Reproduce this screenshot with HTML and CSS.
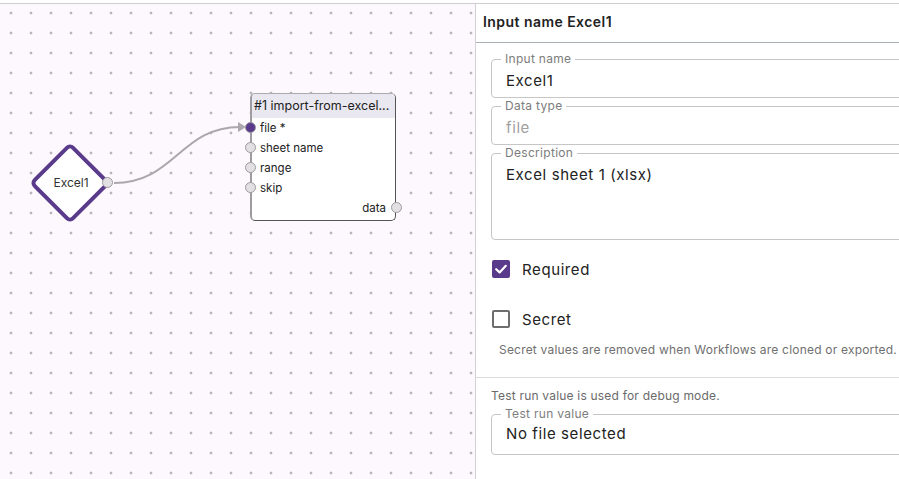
FILE: index.html
```html
<!DOCTYPE html>
<html>
<head>
<meta charset="utf-8">
<link rel="stylesheet" href="styles.css">
</head>
<body>
<div class="app">
  <div class="canvas">
    <svg class="edges" width="475" height="475" viewBox="0 0 475 475">
      <path d="M114 183 C 175 183, 180 127, 240 127" fill="none" stroke="#aaa7ad" stroke-width="2"/>
      <path d="M238 122 L246 127 L238 132 Z" fill="#aaa7ad"/>
    </svg>
    <div class="diamond"></div>
    <div class="diamond-label">Excel1</div>
    <div class="port port-out-diamond"></div>

    <div class="node">
      <div class="node-title">#1 import-from-excel...</div>
      <div class="node-body">
        <div class="row"><span class="port port-in filled"></span>file *</div>
        <div class="row"><span class="port port-in"></span>sheet name</div>
        <div class="row"><span class="port port-in"></span>range</div>
        <div class="row"><span class="port port-in"></span>skip</div>
        <div class="row out">data<span class="port port-out"></span></div>
      </div>
    </div>
  </div>

  <div class="panel">
    <div class="panel-header">Input name Excel1</div>
    <div class="panel-body">
      <fieldset class="field">
        <legend>Input name</legend>
        <div class="value">Excel1</div>
      </fieldset>
      <fieldset class="field">
        <legend>Data type</legend>
        <div class="value muted">file</div>
      </fieldset>
      <fieldset class="field">
        <legend>Description</legend>
        <div class="value area">Excel sheet 1 (xlsx)</div>
      </fieldset>

      <label class="check first">
        <span class="box checked">
          <svg width="18" height="18" viewBox="0 0 18 18"><path d="M4.2 9.2 L7.6 12.4 L13.8 5.8" fill="none" stroke="#fff" stroke-width="2.2" stroke-linecap="round" stroke-linejoin="round"/></svg>
        </span>
        Required
      </label>
      <label class="check">
        <span class="box"></span>
        Secret
      </label>
      <div class="helper">Secret values are removed when Workflows are cloned or exported.</div>
    </div>
    <div class="divider"></div>
    <div class="panel-body second">
      <div class="note">Test run value is used for debug mode.</div>
      <fieldset class="field test">
        <legend>Test run value</legend>
        <div class="value">No file selected</div>
      </fieldset>
    </div>
  </div>
</div>
</body>
</html>
```
FILE: styles.css
```css
html, body {
  margin: 0;
  padding: 0;
  background: #fff;
}
body {
  font-family: Inter, "Noto Sans", sans-serif;
  color: #222;
  width: 899px;
  height: 479px;
  overflow: hidden;
}
.app {
  margin-top: 3px;
  border-top: 1px solid #cfcfcf;
  display: flex;
  height: 475px;
}
.canvas {
  position: relative;
  width: 475px;
  flex: none;
  height: 475px;
  background-color: #fdf8fd;
  background-image: radial-gradient(circle at 10px 10px, #b8b4bc 1.2px, transparent 1.7px);
  background-size: 20px 20px;
  background-position: 1px -1px;
  border-right: 1px solid #d2d2d2;
  overflow: hidden;
}
.edges {
  position: absolute;
  left: 0;
  top: -4px;
}
.diamond {
  position: absolute;
  left: 41px;
  top: 150px;
  width: 50px;
  height: 50px;
  border: 4px solid #5a3a8b;
  border-radius: 6px;
  background: #fff;
  transform: rotate(45deg);
}
.diamond-label {
  position: absolute;
  left: 31px;
  top: 171px;
  width: 80px;
  text-align: center;
  font-size: 12px;
  line-height: 16px;
  color: #333;
}
.port {
  position: absolute;
  width: 9px;
  height: 9px;
  border-radius: 50%;
  background: #e2e0e3;
  border: 1.5px solid #9c9a9e;
}
.port-out-diamond {
  left: 102px;
  top: 173px;
}
.node {
  position: absolute;
  left: 250px;
  top: 89px;
  width: 143px;
  height: 126px;
  background: #fff;
  border: 1px solid #555;
  border-left: 2px solid #9e9ca0;
  border-top-color: #aaa;
  border-radius: 5px;
}
.node-title {
  height: 24px;
  line-height: 24px;
  background: #e9e7ef;
  font-size: 12.5px;
  padding-left: 2px;
  color: #222;
  border-radius: 4px 4px 0 0;
  white-space: nowrap;
  overflow: hidden;
}
.row {
  position: relative;
  height: 20px;
  line-height: 20px;
  font-size: 11.5px;
  padding-left: 8px;
  color: #222;
}
.row .port-in {
  left: -7px;
  top: 4px;
}
.port.filled {
  background: #5a3a8b;
}
.row.out {
  text-align: right;
  padding-right: 9px;
}
.row .port-out {
  right: -7px;
  top: 4px;
}

.panel {
  flex: 1;
  min-width: 0;
  overflow: hidden;
}
.panel-header {
  height: 38px;
  line-height: 35px;
  padding-left: 7px;
  font-size: 14px;
  font-weight: 600;
  letter-spacing: 0.45px;
  color: #222;
  border-bottom: 1px solid #a6b0b9;
}
.panel-body {
  padding: 9px 0 0 15px;
  margin-right: -30px;
}
.field {
  margin: 0 0 1px 0;
  padding: 0 14px;
  border: 1px solid #c6c6c6;
  border-radius: 4px;
  min-width: 0;
}
.field legend {
  font-size: 12px;
  line-height: 14px;
  letter-spacing: 0.3px;
  color: #7d7d7d;
  padding: 0 4px;
  margin-left: -5px;
}
.value {
  font-size: 15px;
  line-height: 20px;
  letter-spacing: 0.6px;
  padding: 5px 0 6px;
  color: #222;
}
.value.muted {
  color: #a0a0a0;
}
.value.area {
  padding: 5px 0 0;
  height: 74px;
}
.check {
  display: flex;
  align-items: center;
  height: 36px;
  font-size: 15px;
  letter-spacing: 0.6px;
  color: #222;
  padding-left: 1px;
}
.check.first {
  margin-top: 11px;
  margin-bottom: 14px;
}
.box {
  width: 14px;
  height: 14px;
  border: 2px solid #6e6e6e;
  border-radius: 2px;
  margin-right: 12px;
  display: flex;
}
.box.checked {
  background: #5a3a8b;
  border-color: #5a3a8b;
}
.box svg {
  margin: -2px;
}
.helper {
  font-size: 12px;
  line-height: 14px;
  letter-spacing: 0.2px;
  color: #707070;
  padding-left: 8px;
  margin-top: 6px;
  white-space: nowrap;
}
.divider {
  margin-top: 20px;
  border-top: 1px solid #dcdcdc;
}
.panel-body.second {
  padding-top: 11px;
}
.note {
  font-size: 12px;
  line-height: 14px;
  letter-spacing: 0.2px;
  color: #6a6a6a;
  margin-bottom: 4px;
}
.field.test .value {
  padding: 3px 0 10px;
}
```
